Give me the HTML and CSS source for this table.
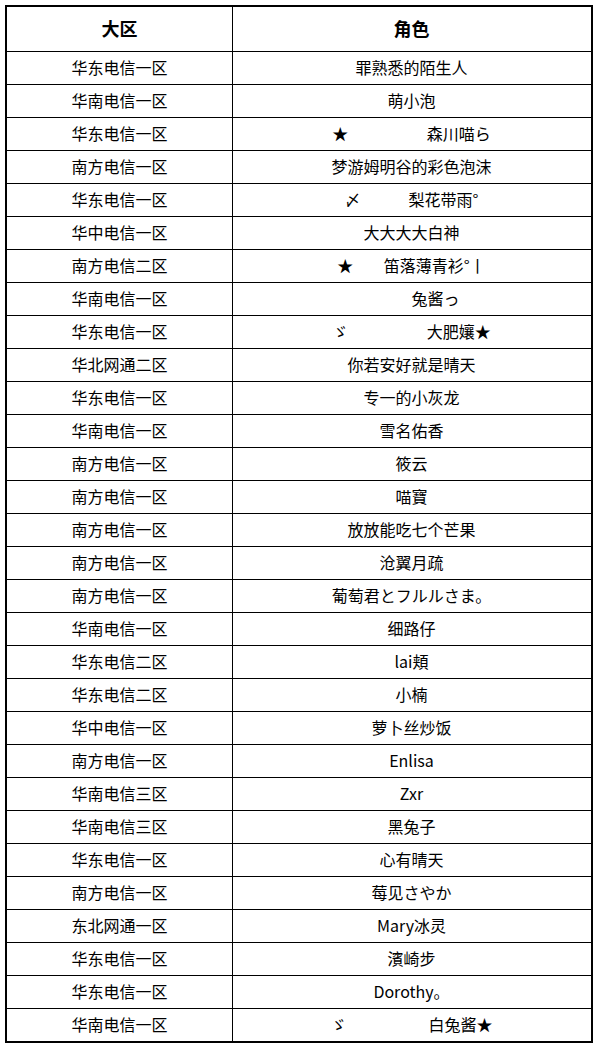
FILE: index.html
```html
<!DOCTYPE html>
<html lang="zh-CN">
<head>
<meta charset="utf-8">
<title>大区角色</title>
<link rel="stylesheet" href="styles.css">
</head>
<body>
<div class="sheet">
  <div class="row head"><div class="cell">大区</div><div class="cell">角色</div></div>
  <div class="row"><div class="cell">华东电信一区</div><div class="cell">罪熟悉的陌生人</div></div>
  <div class="row"><div class="cell">华南电信一区</div><div class="cell">萌小泡</div></div>
  <div class="row"><div class="cell">华东电信一区</div><div class="cell">★　　　　    森川喵ら</div></div>
  <div class="row"><div class="cell">南方电信一区</div><div class="cell">梦游姆明谷的彩色泡沫</div></div>
  <div class="row"><div class="cell">华东电信一区</div><div class="cell">〆　　　梨花带雨°</div></div>
  <div class="row"><div class="cell">华中电信一区</div><div class="cell">大大大大白神</div></div>
  <div class="row"><div class="cell">南方电信二区</div><div class="cell">★　    笛落薄青衫°丨</div></div>
  <div class="row"><div class="cell">华南电信一区</div><div class="cell">　　　兔酱っ</div></div>
  <div class="row"><div class="cell">华东电信一区</div><div class="cell">ゞ　　　　    大肥孃★</div></div>
  <div class="row"><div class="cell">华北网通二区</div><div class="cell">你若安好就是晴天</div></div>
  <div class="row"><div class="cell">华东电信一区</div><div class="cell">专一的小灰龙</div></div>
  <div class="row"><div class="cell">华南电信一区</div><div class="cell">雪名佑香</div></div>
  <div class="row"><div class="cell">南方电信一区</div><div class="cell">筱云</div></div>
  <div class="row"><div class="cell">南方电信一区</div><div class="cell">喵寶</div></div>
  <div class="row"><div class="cell">南方电信一区</div><div class="cell">放放能吃七个芒果</div></div>
  <div class="row"><div class="cell">南方电信一区</div><div class="cell">沧翼月疏</div></div>
  <div class="row"><div class="cell">南方电信一区</div><div class="cell">葡萄君とフルルさま。</div></div>
  <div class="row"><div class="cell">华南电信一区</div><div class="cell">细路仔</div></div>
  <div class="row"><div class="cell">华东电信二区</div><div class="cell">lai頬</div></div>
  <div class="row"><div class="cell">华东电信二区</div><div class="cell">小楠</div></div>
  <div class="row"><div class="cell">华中电信一区</div><div class="cell">萝卜丝炒饭</div></div>
  <div class="row"><div class="cell">南方电信一区</div><div class="cell">Enlisa</div></div>
  <div class="row"><div class="cell">华南电信三区</div><div class="cell">Zxr</div></div>
  <div class="row"><div class="cell">华南电信三区</div><div class="cell">黑兔子</div></div>
  <div class="row"><div class="cell">华东电信一区</div><div class="cell">心有晴天</div></div>
  <div class="row"><div class="cell">南方电信一区</div><div class="cell">莓见さやか</div></div>
  <div class="row"><div class="cell">东北网通一区</div><div class="cell">Mary冰灵</div></div>
  <div class="row"><div class="cell">华东电信一区</div><div class="cell">濱崎步</div></div>
  <div class="row"><div class="cell">华东电信一区</div><div class="cell">Dorothy。</div></div>
  <div class="row"><div class="cell">华南电信一区</div><div class="cell">ゞ　　　　     白兔酱★</div></div>
</div>
</body>
</html>
```

FILE: styles.css
```css
html, body {
  margin: 0;
  padding: 0;
  background: #fff;
}
body {
  padding: 5px;
  font-family: "Noto Sans CJK SC", "Noto Sans", sans-serif;
  color: #000;
}
.sheet {
  width: 584px;
  border: 2px solid #000;
}
.row {
  display: grid;
  grid-template-columns: 226px 357px;
  border-bottom: 1px solid #000;
  height: 32px;
}
.row:last-child {
  border-bottom: none;
}
.row.head {
  height: 44px;
}
.cell {
  display: flex;
  align-items: center;
  justify-content: center;
  font-size: 16px;
  white-space: pre;
  line-height: 1;
  padding-bottom: 2px;
  box-sizing: border-box;
}
.cell:first-child {
  border-right: 1px solid #000;
}
.head .cell {
  font-size: 18px;
  font-weight: bold;
}
```
